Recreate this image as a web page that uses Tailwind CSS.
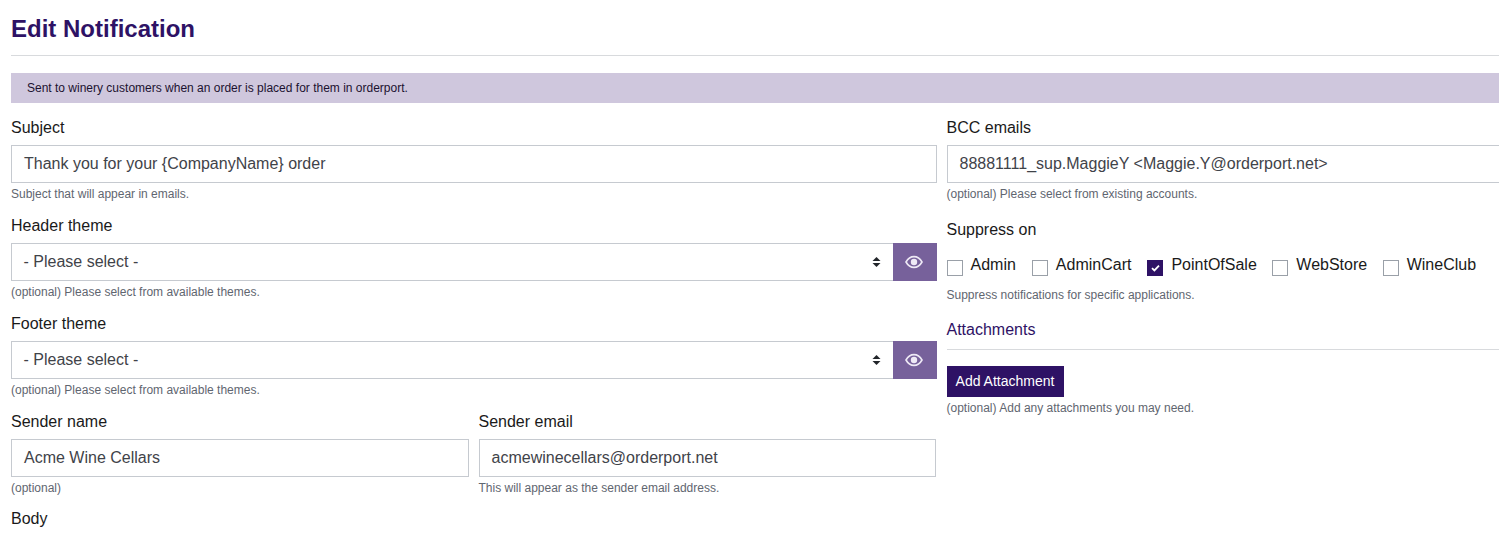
<!DOCTYPE html>
<html lang="en">
  <head>
    <meta charset="UTF-8" />
    <title>Edit Notification</title>
    <script src="https://cdn.jsdelivr.net/npm/@tailwindcss/browser@4"></script>
  </head>
  <body class="bg-white font-['Liberation_Sans',Arial,sans-serif] overflow-hidden h-[536px]">
    <div class="pl-[11px] w-[1540px]">
      <!-- Title -->
      <div class="w-[1488px] h-[56px] border-b border-[#d8dadd] pt-[13px]">
        <h1 class="text-[24px] leading-[32px] font-bold text-[#2e1265]">Edit Notification</h1>
      </div>

      <div class="w-[1488px] h-[30px] mt-[17px] bg-[#cfc7dd] pl-[16px] text-[12px] leading-[30px] text-[#1c1230]">
        Sent to winery customers when an order is placed for them in orderport.
      </div>

      <div class="flex gap-[9.5px] mt-[12px]">
        <!-- Left column -->
        <div class="w-[926px]">
          <div class="h-[98px]">
            <label class="block text-[16px] leading-[24px] pt-[1px] mb-[5px] h-[25px] text-[#1a1a1a]">Subject</label>
            <div class="h-[38px] border border-[#c6cad0] pl-[12px] text-[16px] leading-[36px] text-[#3f4349]">Thank you for your {CompanyName} order</div>
            <p class="text-[12px] leading-[18px] mt-[2px] text-[#5f6670]">Subject that will appear in emails.</p>
          </div>

          <div class="h-[98px]">
            <label class="block text-[16px] leading-[24px] pt-[1px] mb-[5px] h-[25px] text-[#1a1a1a]">Header theme</label>
            <div class="flex h-[38px]">
              <div class="flex-1 flex items-center justify-between border border-r-0 border-[#c6cad0] pl-[11.5px] pr-[12px] text-[16px] text-[#3f4349]">
                <span>- Please select -</span>
                <svg class="w-[9px] h-[14px]" viewBox="0 0 9 14"><path d="M4.5 2 8.500 6H.5zM4.500 12 .5 8h8z" fill="#22252a" /></svg>
              </div>
              <button class="w-[44px] flex items-center justify-center pr-[2px] pb-[1px] bg-[#77619b]">
                <svg class="w-[18px] h-[14px]" viewBox="0 0 18 14" fill="none"><path d="M1 7c2-3.600 4.800-5.400 8-5.400S15 3.400 17 7c-2 3.600-4.800 5.400-8 5.400S3 10.600 1 7z" stroke="#eee9f5" stroke-width="1.600" /><circle cx="9" cy="7" r="3.200" fill="#eee9f5" /></svg>
              </button>
            </div>
            <p class="text-[12px] leading-[18px] mt-[2px] text-[#5f6670]">(optional) Please select from available themes.</p>
          </div>

          <div class="h-[98px]">
            <label class="block text-[16px] leading-[24px] pt-[1px] mb-[5px] h-[25px] text-[#1a1a1a]">Footer theme</label>
            <div class="flex h-[38px]">
              <div class="flex-1 flex items-center justify-between border border-r-0 border-[#c6cad0] pl-[11.5px] pr-[12px] text-[16px] text-[#3f4349]">
                <span>- Please select -</span>
                <svg class="w-[9px] h-[14px]" viewBox="0 0 9 14"><path d="M4.5 2 8.500 6H.5zM4.500 12 .5 8h8z" fill="#22252a" /></svg>
              </div>
              <button class="w-[44px] flex items-center justify-center pr-[2px] pb-[1px] bg-[#77619b]">
                <svg class="w-[18px] h-[14px]" viewBox="0 0 18 14" fill="none"><path d="M1 7c2-3.600 4.800-5.400 8-5.400S15 3.400 17 7c-2 3.600-4.800 5.400-8 5.400S3 10.600 1 7z" stroke="#eee9f5" stroke-width="1.600" /><circle cx="9" cy="7" r="3.200" fill="#eee9f5" /></svg>
              </button>
            </div>
            <p class="text-[12px] leading-[18px] mt-[2px] text-[#5f6670]">(optional) Please select from available themes.</p>
          </div>

          <div class="flex gap-[9.5px] h-[98px]">
            <div class="w-[458px]">
              <label class="block text-[16px] leading-[24px] pt-[1px] mb-[5px] h-[25px] text-[#1a1a1a]">Sender name</label>
              <div class="h-[38px] border border-[#c6cad0] pl-[12px] text-[16px] leading-[36px] text-[#3f4349]">Acme Wine Cellars</div>
              <p class="text-[12px] leading-[18px] mt-[2px] text-[#5f6670]">(optional)</p>
            </div>
            <div class="w-[457.5px]">
              <label class="block text-[16px] leading-[24px] pt-[1px] mb-[5px] h-[25px] text-[#1a1a1a]">Sender email</label>
              <div class="h-[38px] border border-[#c6cad0] pl-[12px] text-[16px] leading-[36px] text-[#3f4349]">acmewinecellars@orderport.net</div>
              <p class="text-[12px] leading-[18px] mt-[2px] text-[#5f6670]">This will appear as the sender email address.</p>
            </div>
          </div>

          <label class="block text-[16px] leading-[24px] text-[#1a1a1a]">Body</label>
        </div>

        <!-- Right column -->
        <div class="w-[560px]">
          <div class="h-[103px]">
            <label class="block text-[16px] leading-[24px] pt-[1px] mb-[5px] h-[25px] text-[#1a1a1a]">BCC emails</label>
            <div class="h-[38px] border border-[#c6cad0] pl-[12px] text-[16px] leading-[36px] text-[#3f4349]">88881111_sup.MaggieY &lt;Maggie.Y@orderport.net&gt;</div>
            <p class="text-[12px] leading-[18px] mt-[2px] text-[#5f6670]">(optional) Please select from existing accounts.</p>
          </div>

          <label class="block text-[16px] leading-[24px] text-[#1a1a1a]">Suppress on</label>
          <div class="flex mt-[13px] h-[24px] items-center text-[16px] text-[#1a1a1a]">
            <span class="w-[16px] h-[16px] mt-[2px] border border-[#9aa0a8]"></span><span class="ml-[8px] mr-[16px] mb-[5px]">Admin</span>
            <span class="w-[16px] h-[16px] mt-[2px] border border-[#9aa0a8]"></span><span class="ml-[8px] mr-[16px] mb-[5px]">AdminCart</span>
            <span class="w-[16px] h-[16px] mt-[2px] flex items-center justify-center bg-[#2e1265]">
              <svg class="w-[9px] h-[8px]" viewBox="0 0 9 8" fill="none"><path d="M1 4.200 3.400 6.400 8 1.600" stroke="#fff" stroke-width="1.800" /></svg>
            </span><span class="ml-[8px] mr-[15.5px] mb-[5px]">PointOfSale</span>
            <span class="w-[16px] h-[16px] mt-[2px] border border-[#9aa0a8]"></span><span class="ml-[8px] mr-[15.5px] mb-[5px]">WebStore</span>
            <span class="w-[16px] h-[16px] mt-[2px] border border-[#9aa0a8]"></span><span class="ml-[8px] mb-[5px]">WineClub</span>
          </div>
          <p class="text-[12px] leading-[18px] mt-[7px] text-[#5f6670]">Suppress notifications for specific applications.</p>

          <h3 class="text-[16px] leading-[24px] mt-[14px] pb-[7px] border-b border-[#d8dadd] text-[#2e1265]">Attachments</h3>
          <button class="block mt-[16px] h-[31px] w-[117px] bg-[#2e1265] text-white text-[14px] leading-[31px] text-center">Add Attachment</button>
          <p class="text-[12px] leading-[18px] mt-[2px] text-[#5f6670]">(optional) Add any attachments you may need.</p>
        </div>
      </div>
    </div>
  </body>
</html>
